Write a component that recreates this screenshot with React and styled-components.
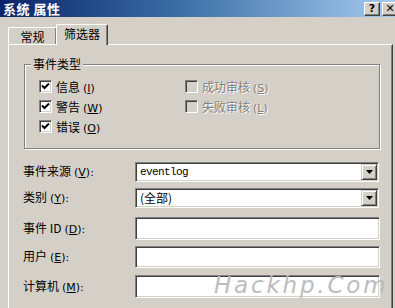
import styled, { createGlobalStyle } from "styled-components"

const GlobalStyle = createGlobalStyle`
    html, body {
        margin: 0;
        padding: 0;
        background: #d4d0c8;
    }
    body {
        font-family: "Noto Sans CJK SC", "DejaVu Sans", sans-serif;
        font-size: 12px;
        color: #000;
    }
`

const Window = styled.div`
    position: relative;
    width: 395px;
    height: 308px;
    overflow: hidden;
    background: #d4d0c8;
`

const TitleBar = styled.div`
    height: 17px;
    display: flex;
    align-items: center;
    justify-content: space-between;
    padding-left: 3px;
    background: linear-gradient(to right, #0a246a 0%, #3a6ea5 45%, #a6caf0 100%);
`

const TitleText = styled.span`
    color: #fff;
    font-weight: bold;
    font-size: 13px;
    line-height: 17px;
    letter-spacing: 0.5px;
`

const TitleButtons = styled.div`
    display: flex;
    gap: 2px;
    margin-right: -3px;
`

const TitleButton = styled.div`
    width: 16px;
    height: 14px;
    box-sizing: border-box;
    background: #d4d0c8;
    border-top: 1px solid #fff;
    border-left: 1px solid #fff;
    border-right: 1px solid #404040;
    border-bottom: 1px solid #404040;
    box-shadow: inset -1px -1px 0 #808080;
    display: flex;
    align-items: center;
    justify-content: center;
    font-family: "DejaVu Sans", sans-serif;
    font-weight: bold;
    font-size: 11px;
    line-height: 1;
`

const Body = styled.div`
    padding: 7px 2px 0 8px;
`

const TabStrip = styled.div`
    display: flex;
    align-items: flex-end;
    height: 20px;
`

const Tab = styled.div`
    position: relative;
    box-sizing: border-box;
    width: ${p => p.$active ? "52px" : "49px"};
    height: ${p => p.$active ? "21px" : "17px"};
    margin-left: ${p => p.$active ? "-1px" : "0"};
    margin-bottom: ${p => p.$active ? "-1px" : "0"};
    z-index: ${p => p.$active ? 2 : 1};
    background: #d4d0c8;
    border-top: 1px solid #fff;
    border-left: 1px solid #fff;
    border-right: 1px solid #404040;
    box-shadow: inset -1px 0 0 #808080;
    border-radius: 2px 2px 0 0;
    display: flex;
    align-items: center;
    justify-content: center;
    padding-bottom: ${p => p.$active ? "3px" : "0"};
    font-size: 12px;
`

const Panel = styled.div`
    height: 270px;
    border-top: 1px solid #fff;
    border-left: 1px solid #fff;
    border-right: 1px solid #404040;
    box-shadow: inset -1px 0 0 #808080;
    padding: 19px 12px 0 15px;
`

const GroupBox = styled.div`
    position: relative;
    height: 85px;
    box-sizing: border-box;
    border: 1px solid #808080;
    box-shadow: inset 1px 1px 0 #fff, 1px 1px 0 #fff;
    padding: 15px 0 0 14px;
    display: grid;
    grid-template-columns: 146px auto;
    grid-auto-rows: 20px;
    align-content: start;
`

const Legend = styled.span`
    position: absolute;
    top: -9px;
    left: 6px;
    padding: 0 2px;
    background: #d4d0c8;
    line-height: 16px;
`

const CheckRow = styled.label`
    display: flex;
    align-items: flex-start;
    gap: 4px;
    line-height: 13px;
    color: ${p => p.$disabled ? "#808080" : "#000"};
    text-shadow: ${p => p.$disabled ? "1px 1px 0 #fff" : "none"};
`

const Box = styled.span`
    width: 13px;
    height: 13px;
    box-sizing: border-box;
    flex: none;
    background: ${p => p.$disabled ? "#d4d0c8" : "#fff"};
    border-top: 1px solid #808080;
    border-left: 1px solid #808080;
    border-right: 1px solid #fff;
    border-bottom: 1px solid #fff;
    box-shadow: inset 1px 1px 0 #404040, inset -1px -1px 0 #d4d0c8;
    display: flex;
    align-items: center;
    justify-content: center;
`

const Key = styled.u`
    text-underline-offset: 1px;
`

const Mnemonic = styled.span`
    font-family: "DejaVu Sans", sans-serif;
    font-size: 11px;
    margin-left: 3px;
`

const Fields = styled.div`
    margin-top: 13px;
    margin-left: -1px;
    display: flex;
    flex-direction: column;
`

const FieldRow = styled.div`
    display: grid;
    grid-template-columns: 112px 245px;
    align-items: center;
    margin-top: ${p => p.$top}px;
`

const FieldLabel = styled.span`
    line-height: 14px;
`

const Sunken = styled.div`
    position: relative;
    box-sizing: border-box;
    height: ${p => p.$h}px;
    width: ${p => p.$w}px;
    background: #fff;
    border-top: 1px solid #808080;
    border-left: 1px solid #808080;
    border-right: 1px solid #fff;
    border-bottom: 1px solid #fff;
    box-shadow: inset 1px 1px 0 #404040, inset -1px -1px 0 #d4d0c8;
    display: flex;
    align-items: center;
    padding-left: 4px;
`

const Value = styled.span`
    font-family: ${p => p.$mono ? '"Liberation Mono", monospace' : '"Noto Sans CJK SC", sans-serif'};
    font-size: ${p => p.$mono ? "11px" : "12px"};
    letter-spacing: ${p => p.$mono ? "-0.6px" : "0"};
    line-height: 14px;
    flex: 1;
`

const DropButton = styled.div`
    width: 16px;
    height: 16px;
    box-sizing: border-box;
    margin-right: 1px;
    background: #d4d0c8;
    border-top: 1px solid #d4d0c8;
    border-left: 1px solid #d4d0c8;
    border-right: 1px solid #404040;
    border-bottom: 1px solid #404040;
    box-shadow: inset 1px 1px 0 #fff, inset -1px -1px 0 #808080;
    display: flex;
    align-items: center;
    justify-content: center;
`

const Watermark = styled.div`
    position: absolute;
    left: 214px;
    top: 272px;
    font-family: "DejaVu Sans", sans-serif;
    font-style: italic;
    font-weight: 200;
    font-size: 23px;
    letter-spacing: 2.8px;
    color: #bcbcbc;
    pointer-events: none;
`

function Check({ checked, disabled, text, k }) {
    return (
        <CheckRow $disabled={disabled}>
            <Box $disabled={disabled}>
                {checked && (
                    <svg width="9" height="9" viewBox="0 0 9 9">
                        <path d="M1 3.5 L3.5 6 L8 1.5" stroke="#000" strokeWidth="2" fill="none" />
                    </svg>
                )}
            </Box>
            <span>{text}<Mnemonic>(<Key>{k}</Key>)</Mnemonic></span>
        </CheckRow>
    )
}

function Combo({ value, mono }) {
    return (
        <Sunken $h={20} $w={244}>
            <Value $mono={mono}>{value}</Value>
            <DropButton>
                <svg width="7" height="4" viewBox="0 0 7 4">
                    <polygon points="0,0 7,0 3.5,4" fill="#000" />
                </svg>
            </DropButton>
        </Sunken>
    )
}

function Field({ label, k, top, children }) {
    return (
        <FieldRow $top={top}>
            <FieldLabel>{label}<Mnemonic>(<Key>{k}</Key>):</Mnemonic></FieldLabel>
            {children}
        </FieldRow>
    )
}

export default function App() {
    return (
        <Window>
            <GlobalStyle />
            <TitleBar>
                <TitleText>系统 属性</TitleText>
                <TitleButtons>
                    <TitleButton>?</TitleButton>
                    <TitleButton>✕</TitleButton>
                </TitleButtons>
            </TitleBar>
            <Body>
                <TabStrip>
                    <Tab>常规</Tab>
                    <Tab $active>筛选器</Tab>
                </TabStrip>
                <Panel>
                    <GroupBox>
                        <Legend>事件类型</Legend>
                        <Check checked text="信息" k="I" />
                        <Check disabled text="成功审核" k="S" />
                        <Check checked text="警告" k="W" />
                        <Check disabled text="失败审核" k="L" />
                        <Check checked text="错误" k="O" />
                    </GroupBox>
                    <Fields>
                        <Field label="事件来源" k="V" top={0}>
                            <Combo value="eventlog" mono />
                        </Field>
                        <Field label="类别" k="Y" top={6}>
                            <Combo value="(全部)" />
                        </Field>
                        <Field label="事件 ID" k="D" top={9}>
                            <Sunken $h={23} $w={245} />
                        </Field>
                        <Field label="用户" k="E" top={6}>
                            <Sunken $h={22} $w={245} />
                        </Field>
                        <Field label="计算机" k="M" top={7}>
                            <Sunken $h={23} $w={245} />
                        </Field>
                    </Fields>
                </Panel>
            </Body>
            <Watermark>Hackhp.Com</Watermark>
        </Window>
    )
}
